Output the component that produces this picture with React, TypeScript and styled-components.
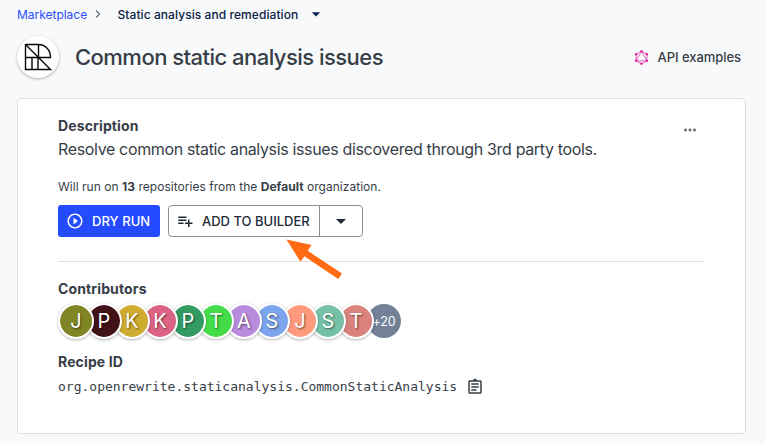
import React from "react";
import styled, { createGlobalStyle } from "styled-components";

const GlobalStyle = createGlobalStyle`
  * { box-sizing: border-box; }
  body { margin: 0; background: #f8f9fb; font-family: Inter, "Liberation Sans", sans-serif; color: #373e47; overflow: hidden; }
  button { font-family: inherit; }
`;

const Page = styled.main`
  position: relative;
  height: 443px;
  padding: 4px 19px 0 17px;
`;

const Breadcrumbs = styled.nav`
  display: flex;
  align-items: center;
  height: 20px;
  font-size: 12px;
`;

const CrumbLink = styled.a`
  width: 70px;
  color: #2a4cff;
  white-space: nowrap;
  letter-spacing: -0.02px;
`;

const Chevron = styled.svg`
  width: 16px;
  height: 16px;
  margin: 0 15px 0 3px;
  fill: none;
  stroke: #69717d;
  stroke-width: 1.2;
`;

const Crumb = styled.span`
  width: 180px;
  margin-left: -3.5px;
  font-weight: 500;
  color: #0a2247;
  white-space: nowrap;
  letter-spacing: 0.07px;
`;

const Icon = styled.svg<{ $size: number }>`
  width: ${(p) => p.$size}px;
  height: ${(p) => p.$size}px;
  flex: none;
  fill: currentColor;
`;

const CrumbToggle = styled.span`
  display: flex;
  margin-left: 8.5px;
  color: #0a2247;
`;

const Header = styled.header`
  display: flex;
  align-items: center;
  height: 42px;
  margin-top: 12px;
`;

const LogoBadge = styled.div`
  display: grid;
  place-items: center;
  width: 42px;
  height: 42px;
  border-radius: 50%;
  background: #fff;
  box-shadow: 0 1px 3px rgba(0, 0, 0, 0.3);
`;

const Title = styled.h1`
  margin: 0 0 0 16px;
  flex: 1;
  font-size: 22px;
  line-height: 28px;
  font-weight: 500;
  letter-spacing: -0.53px;
  white-space: nowrap;
`;

const ApiLink = styled.a`
  display: flex;
  align-items: center;
  gap: 9px;
  margin-right: 5px;
  font-size: 13px;
  font-weight: 500;
  letter-spacing: -0.05px;
`;

const Card = styled.section`
  height: 336px;
  margin-top: 20px;
  padding: 17px 40px 0;
  background: #fff;
  border: 1px solid #dcdee1;
  border-radius: 4px;
`;

const CardTop = styled.div`
  display: flex;
  justify-content: space-between;
  height: 63px;
`;

const Heading = styled.h2`
  margin: 0;
  font-size: 14px;
  line-height: 20px;
  font-weight: 700;
  letter-spacing: 0.13px;
`;

const Summary = styled.p`
  margin: 0;
  padding-top: 1px;
  font-size: 16px;
  line-height: 24px;
  letter-spacing: -0.35px;
  white-space: nowrap;
`;

const MoreButton = styled.button`
  display: flex;
  align-self: flex-start;
  margin: 5px 6px 0 0;
  padding: 0;
  border: 0;
  background: none;
  color: #6d6f72;
`;

const RunNote = styled.p`
  margin: 0;
  font-size: 12px;
  line-height: 16px;
  letter-spacing: 0.03px;
  white-space: nowrap;
`;

const Strong = styled.strong`
  font-weight: 700;
`;

const Actions = styled.div`
  display: flex;
  gap: 8px;
  height: 32px;
  margin-top: 10px;
`;

const RunButton = styled.button`
  display: flex;
  align-items: center;
  gap: 8px;
  width: 102px;
  padding: 0 0 0 8px;
  border: 0;
  border-radius: 3px;
  background: #254bff;
  color: #fff;
  font-size: 13px;
  font-weight: 500;
  letter-spacing: 0.05px;
  white-space: nowrap;
`;

const SplitButton = styled.div`
  display: flex;
  width: 195px;
  border: 1px solid #8b8d90;
  border-radius: 4px;
  color: #212b36;
`;

const BuilderButton = styled.button`
  display: flex;
  align-items: center;
  gap: 8px;
  width: 151px;
  padding: 0 0 0 7px;
  border: 0;
  border-right: 1px solid #8b8d90;
  background: none;
  color: inherit;
  font-size: 13px;
  font-weight: 500;
  letter-spacing: 0;
  white-space: nowrap;
`;

const MenuButton = styled.button`
  display: grid;
  place-items: center;
  flex: 1;
  padding: 0;
  border: 0;
  background: none;
  color: inherit;
`;

const Divider = styled.hr`
  margin: 24px 0 17px;
  border: 0;
  border-top: 1px solid #dfdfdf;
`;

const Avatars = styled.div`
  display: flex;
  flex-direction: row-reverse;
  justify-content: flex-end;
  align-items: center;
  height: 36px;
  margin-top: 4px;
`;

const Avatar = styled.span<{ $color: string }>`
  display: grid;
  place-items: center;
  position: relative;
  flex: none;
  width: 36px;
  height: 36px;
  margin-right: -8px;
  border: 2px solid #fff;
  border-radius: 50%;
  background: ${(p) => p.$color};
  background-clip: padding-box;
  box-shadow: 0 1px 3px rgba(0, 0, 0, 0.3);
  color: #fff;
  font-size: 20px;
  line-height: 32px;
  text-shadow: 1px 1px 2px rgba(0, 0, 0, 0.55);
`;

const Overflow = styled.span`
  display: grid;
  place-items: center;
  flex: none;
  width: 34px;
  height: 34px;
  margin-left: 1px;
  border-radius: 50%;
  background: #728197;
  color: #fff;
  font-size: 12.5px;
  letter-spacing: -0.2px;
`;

const RecipeHeading = styled(Heading)`
  margin-top: 13px;
`;

const RecipeRow = styled.div`
  display: flex;
  align-items: center;
  gap: 9px;
  height: 20px;
  margin-top: 5px;
`;

const Code = styled.code`
  font-family: "DejaVu Sans Mono", monospace;
  font-size: 13px;
  line-height: 20px;
`;

const Arrow = styled.svg`
  position: absolute;
  left: 284px;
  top: 232px;
  width: 62px;
  height: 50px;
`;

const contributors: [string, string][] = [
  ["J", "#7f8522"],
  ["P", "#421219"],
  ["K", "#cfab30"],
  ["K", "#dd6385"],
  ["P", "#319b61"],
  ["T", "#44dc48"],
  ["A", "#b98bdd"],
  ["S", "#7da5ed"],
  ["J", "#ff9b7c"],
  ["S", "#75c1a6"],
  ["T", "#da827b"],
];

const hexagon: [number, number][] = [
  [7, 1.2], [12.4, 4.2], [12.4, 10.8], [7, 13.8], [1.6, 10.8], [1.6, 4.2],
];

const DropIcon = ({ size }: { size: number }) => (
  <Icon $size={size} viewBox="0 0 24 24"><path d="M7 10l5 5 5-5z" /></Icon>
);

const Logo = () => (
  <svg width="28" height="28" viewBox="0 0 28 28" fill="none" stroke="#080808" strokeWidth="1.4">
    <path d="M1.5 1.5H14.5C21.5 1.5 26.5 7 26.5 14.5H1.5M1.5 1V26.5H26.5L1.5 1.5M14.5 1.5V14.5M8 14.5V26.5M14 14.5V26.5" />
  </svg>
);

const GraphIcon = () => (
  <svg width="15" height="15" viewBox="-0.5 0 15 15" fill="none" stroke="#df249f" strokeWidth="0.7">
    <path d="M7 1.2L12.4 4.2V10.8L7 13.8L1.6 10.8V4.2ZM7 1.2L12.4 10.8H1.6Z" />
    {hexagon.map(([x, y]) => (
      <circle key={`${x}-${y}`} cx={x} cy={y} r="1.2" fill="#df249f" stroke="none" />
    ))}
  </svg>
);

export default function App() {
  return (
    <>
      <GlobalStyle />
      <Page>
        <Breadcrumbs>
          <CrumbLink>Marketplace</CrumbLink>
          <Chevron viewBox="0 0 16 16"><path d="M6 4.5L9.5 8L6 11.5" /></Chevron>
          <Crumb>Static analysis and remediation</Crumb>
          <CrumbToggle><DropIcon size={20} /></CrumbToggle>
        </Breadcrumbs>
        <Header>
          <LogoBadge><Logo /></LogoBadge>
          <Title>Common static analysis issues</Title>
          <ApiLink><GraphIcon />API examples</ApiLink>
        </Header>
        <Card>
          <CardTop>
            <div>
              <Heading>Description</Heading>
              <Summary>Resolve common static analysis issues discovered through 3rd party tools.</Summary>
            </div>
            <MoreButton aria-label="More">
              <Icon $size={18} viewBox="0 0 24 24">
                <path d="M6 10c-1.1 0-2 .9-2 2s.9 2 2 2 2-.9 2-2-.9-2-2-2zm12 0c-1.1 0-2 .9-2 2s.9 2 2 2 2-.9 2-2-.9-2-2-2zm-6 0c-1.1 0-2 .9-2 2s.9 2 2 2 2-.9 2-2-.9-2-2-2z" />
              </Icon>
            </MoreButton>
          </CardTop>
          <RunNote>
            Will run on <Strong>13</Strong> repositories from the <Strong>Default</Strong> organization.
          </RunNote>
          <Actions>
            <RunButton>
              <Icon $size={18} viewBox="0 0 24 24">
                <path d="M10 16.5l6-4.5-6-4.5v9zM12 2C6.48 2 2 6.48 2 12s4.48 10 10 10 10-4.48 10-10S17.52 2 12 2zm0 18c-4.41 0-8-3.59-8-8s3.59-8 8-8 8 3.59 8 8-3.59 8-8 8z" />
              </Icon>
              DRY RUN
            </RunButton>
            <SplitButton>
              <BuilderButton>
                <Icon $size={18} viewBox="0 0 24 24">
                  <path d="M14 10H3v2h11v-2zm0-4H3v2h11V6zm4 8v-4h-2v4h-4v2h4v4h2v-4h4v-2h-4zM3 16h7v-2H3v2z" />
                </Icon>
                ADD TO BUILDER
              </BuilderButton>
              <MenuButton aria-label="More actions"><DropIcon size={24} /></MenuButton>
            </SplitButton>
          </Actions>
          <Divider />
          <Heading>Contributors</Heading>
          <Avatars>
            <Overflow>+20</Overflow>
            {[...contributors].reverse().map(([letter, color]) => (
              <Avatar key={color} $color={color}>{letter}</Avatar>
            ))}
          </Avatars>
          <RecipeHeading>Recipe ID</RecipeHeading>
          <RecipeRow>
            <Code>org.openrewrite.staticanalysis.CommonStaticAnalysis</Code>
            <Icon $size={18} viewBox="0 0 24 24">
              <path d="M7 15h7v2H7zm0-4h10v2H7zm0-4h10v2H7zm12-4h-4.18C14.4 1.84 13.3 1 12 1c-1.3 0-2.4.84-2.82 2H5c-1.1 0-2 .9-2 2v14c0 1.1.9 2 2 2h14c1.1 0 2-.9 2-2V5c0-1.1-.9-2-2-2zm0 16H5V5h14v14z" />
            </Icon>
          </RecipeRow>
        </Card>
        <Arrow viewBox="0 0 62 50">
          <path d="M2.5 7.5L27.5 13L23.7 18.8L58 41.5L54.2 47L20.3 24.2L16.5 29.8Z" fill="#ff6a13" />
        </Arrow>
      </Page>
    </>
  );
}
